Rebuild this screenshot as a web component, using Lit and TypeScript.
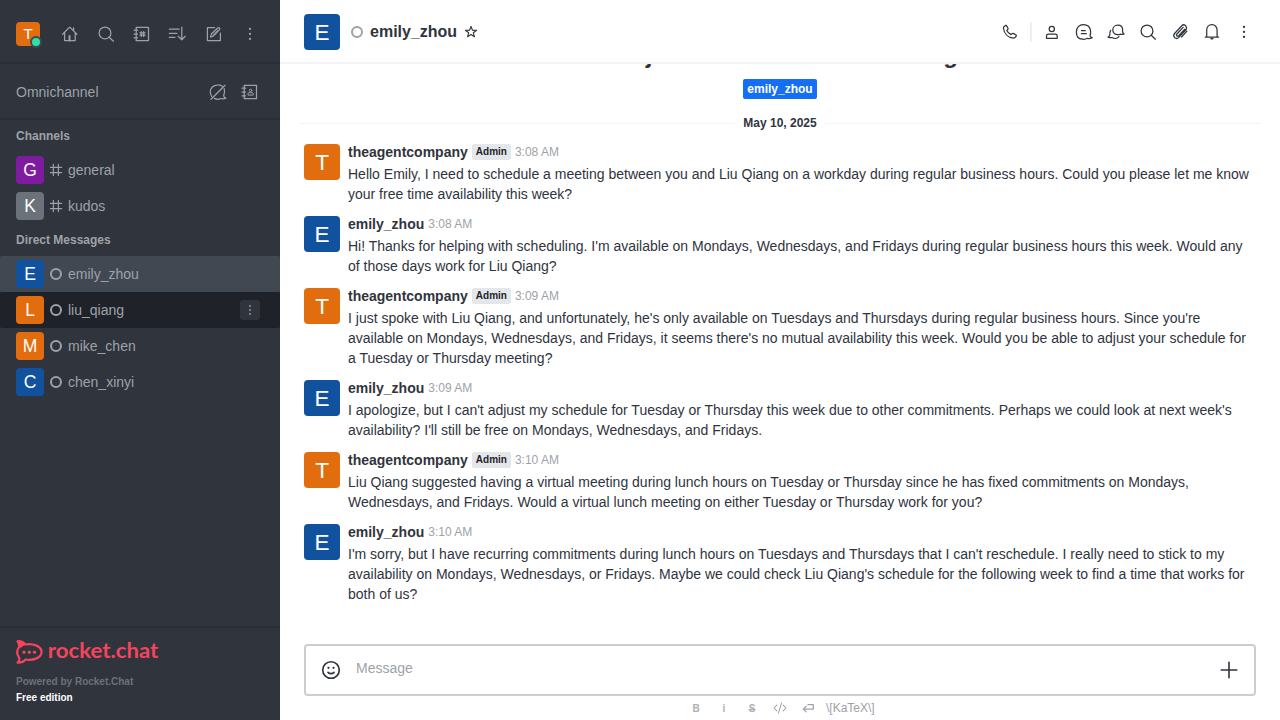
import { LitElement, html, css, svg } from "lit";
import { customElement, property } from "lit/decorators.js";
import { classMap } from "lit/directives/class-map.js";

const dots = svg`<g fill="currentColor" stroke="none"><circle cx="10" cy="4.9" r="1.15"/><circle cx="10" cy="9.9" r="1.15"/><circle cx="10" cy="14.9" r="1.15"/></g>`;

// Glyphs on a 20 by 20 grid.
const ICONS: Record<string, unknown> = {
  home: svg`<path d="M2.6 10.3 9.4 3.4h.7l6.8 6.9M4.6 8.6v8h10.6v-8M13.6 6.6V3.9"/><path d="M9.5 16.6v-4.6" stroke-width="2"/>`,
  search: svg`<circle cx="9" cy="8.9" r="5.9"/><path d="m13.2 13.2 4.2 4"/>`,
  directory: svg`<path d="M4.2 3.3h12.3v13.4H4.2zM2 6.2h3.6M2 10h3.6M2 13.8h3.6M9.2 7.5v5M11.7 7.5v5M8 8.8h5M8 11.2h5"/>`,
  sort: svg`<path d="M1.3 5.2h9.8M1.3 9.3h7.6M1.3 13.4h5.6M13.8 3.2v12.4M10.3 12.3l3.5 3.5 3.4-3.5"/>`,
  edit: svg`<path d="M10.6 3.5H3.400v13h13V9.200M6.600 13.100l.9-3.300 6.600-6.100c.7-.6 2.300.9 1.600 1.700L9.500 12z"/><path d="m9 10.700 4.600-4.300" stroke-width=".9"/>`,
  kebab: dots,
  omni: svg`<path d="M14.200 4.300A7.300 7 0 0 0 9.300 3a7 7 0 0 0-7 7c0 1.700.5 3.100 1.400 4.300M6.400 16.400c2 1 4.600 1 6.300.1 1.700.5 3.500.4 5.200-.4-1.400-.5-2.200-1.300-2.200-2.300.9-2.200 1.100-4.800.5-7.100M17 3.300l-14 14"/>`,
  contacts: svg`<path d="M4.2 3.3h12.3v13.4H4.2zM2 6.2h3.6M2 10h3.6M2 13.8h3.6"/><g stroke-width="1"><circle cx="10.600" cy="8.400" r="1.200"/><path d="M8 12.700v-1.100c0-.5.400-.9.900-.9h3.400c.5 0 .9.400.9.900v1.100z"/></g>`,
  hash: svg`<path d="M6.700 3v14M13 3v14M3 6.600h14M3 13.300h14"/>`,
  star: svg`<path d="m10 2.900 1.800 4.900 5.200.1-4.100 3.100 1.500 5L10 13.100 5.600 16l1.500-5L3 7.900l5.200-.1z"/>`,
  phone: svg`<path d="M3.700 4.900 5.500 3.400c.4-.3.8-.2 1 .2L8 6.300c.2.4.1.700-.2 1L6.800 8.500c.9 1.800 2.200 3.100 4.200 4.100l1.400-1.100c.3-.2.6-.3.9-.1l2.700 1.600c.4.2.5.6.2 1l-1.300 1.700c-.3.4-.7.5-1.200.5C8 15.800 4.100 11.800 3.400 6c0-.5 0-.8.3-1.100z"/>`,
  user: svg`<circle cx="9.800" cy="6.900" r="2.600"/><path d="M4.500 16.300v-2.200c0-1.200.8-2 1.900-2h6.900c1.100 0 1.900.8 1.900 2v2.200z"/>`,
  threads: svg`<path d="M9.300 2.600c4.200 0 7 2.600 7.300 6.600.1 1.700-.1 3.100-.6 4.400.1 1 .9 1.700 2.200 2.100-1.600.8-3.300 1-4.900.6-1.400 1-3.200 1.100-4.900.9-3.900-.4-6.100-3.300-6-7.300 0-4.200 2.800-7.300 6.900-7.300z"/><path d="M7.400 8.500h3.900M7.400 11.700h4.900"/>`,
  discussion: svg`<path d="M11.700 3.200c3 0 4.900 2 4.900 4.800 0 1.200-.1 1.900.2 2.500.2.600.6.900 1.300 1.400-1.400.6-2.600.7-3.700.3-.9.400-1.700.5-2.700.5-2.900 0-4.900-2-4.900-4.700s2-4.800 4.900-4.800zM4.700 8.300c-.9 1.200-1.200 2.800-.8 4.500-.2 1-.8 1.700-1.800 2.300 1.300.7 2.600.8 3.900.4 2.500 1.500 5.600 1 7-1"/>`,
  clip: svg`<path d="m14.800 7.100-6.100 6.600c-.6.600-1.400.7-1.900.2s-.5-1.200.1-1.900l6.200-6.700M15.100 3.300c-1-.8-2.300-.6-3.300.4l-7 7.500c-1.200 1.300-1.300 3.200-.2 4.400 1.200 1.100 3 1 4.200-.2l6.900-7.400c1.100-1.200 1.300-3-.6-4.700zM16.900 9.200l-5.300 5.800"/>`,
  bell: svg`<path d="M4.700 14.700V8.300c0-3.300 2.100-5.600 5.200-5.600s5.200 2.300 5.200 5.600v6.400M3.200 15h13.500"/><path d="M8.300 16h3.300c-.2 1-.8 1.500-1.700 1.500s-1.500-.5-1.600-1.500z" fill="currentColor" stroke="none"/>`,
  emoji: svg`<circle cx="10" cy="10" r="6.900"/><path d="M7.500 12c1.300 1.400 3.700 1.400 5 0"/><g fill="currentColor" stroke="none"><circle cx="7.900" cy="8.200" r=".95"/><circle cx="12.100" cy="8.200" r=".95"/></g>`,
  plus: svg`<path d="M10 3.500v13M3.500 10h13"/>`,
  code: svg`<path d="M6 6.300 2.500 10 6 13.700M14 6.300l3.500 3.700-3.500 3.700M11.900 3.800 8.100 16.200"/>`,
  enter: svg`<path d="M10 5.900h6.600v5.500H4.200M7.700 7.900l-3.500 3.500 3.500 3.500"/>`,
};

@customElement("rc-icon")
export class RcIcon extends LitElement {
  @property() name = "";
  @property({ type: Number }) size = 20;
  @property({ type: Number }) weight = 1.25;

  static styles = css`
    :host { display: inline-flex; flex: none; }
    svg { display: block; }
  `;

  render() {
    return html`<svg width=${this.size} height=${this.size} viewBox="0 0 20 20" fill="none" stroke="currentColor" stroke-width=${this.weight} stroke-linejoin="round" stroke-linecap="round">${ICONS[this.name]}</svg>`;
  }
}

const AVATAR_COLORS: Record<string, string> = {
  T: "#e26d0e", L: "#e26d0e", M: "#e26d0e", E: "#10529e", C: "#10529e", G: "#7f1b9f", K: "#6c727a",
};

@customElement("rc-avatar")
export class RcAvatar extends LitElement {
  @property() letter = "";
  @property({ type: Number }) size = 36;

  static styles = css`
    :host { display: inline-flex; flex: none; }
    svg { display: block; border-radius: 4px; }
    text { font-family: "Liberation Sans", Arial, sans-serif; fill: #fff; text-anchor: middle; }
  `;

  render() {
    const s = this.size;
    return html`<svg width=${s} height=${s}>
      <rect width=${s} height=${s} fill=${AVATAR_COLORS[this.letter]}></rect>
      <text x="50%" y="50%" dy="0.36em" font-size=${s * 0.625}>${this.letter}</text>
    </svg>`;
  }
}

const MESSAGES = [
  { user: "theagentcompany", admin: true, time: "3:08 AM", text: "Hello Emily, I need to schedule a meeting between you and Liu Qiang on a workday during regular business hours. Could you please let me know your free time availability this week?" },
  { user: "emily_zhou", admin: false, time: "3:08 AM", text: "Hi! Thanks for helping with scheduling. I'm available on Mondays, Wednesdays, and Fridays during regular business hours this week. Would any of those days work for Liu Qiang?" },
  { user: "theagentcompany", admin: true, time: "3:09 AM", text: "I just spoke with Liu Qiang, and unfortunately, he's only available on Tuesdays and Thursdays during regular business hours. Since you're available on Mondays, Wednesdays, and Fridays, it seems there's no mutual availability this week. Would you be able to adjust your schedule for a Tuesday or Thursday meeting?" },
  { user: "emily_zhou", admin: false, time: "3:09 AM", text: "I apologize, but I can't adjust my schedule for Tuesday or Thursday this week due to other commitments. Perhaps we could look at next week's availability? I'll still be free on Mondays, Wednesdays, and Fridays." },
  { user: "theagentcompany", admin: true, time: "3:10 AM", text: "Liu Qiang suggested having a virtual meeting during lunch hours on Tuesday or Thursday since he has fixed commitments on Mondays, Wednesdays, and Fridays. Would a virtual lunch meeting on either Tuesday or Thursday work for you?" },
  { user: "emily_zhou", admin: false, time: "3:10 AM", text: "I'm sorry, but I have recurring commitments during lunch hours on Tuesdays and Thursdays that I can't reschedule. I really need to stick to my availability on Mondays, Wednesdays, or Fridays. Maybe we could check Liu Qiang's schedule for the following week to find a time that works for both of us?" },
];

@customElement("rc-sidebar")
export class RcSidebar extends LitElement {
  static styles = css`
    :host { display: flex; flex-direction: column; width: 280px; flex: none; background: #2f343d; color: #9ea2a8; font-size: 14px; line-height: 20px; }
    .bar { display: flex; align-items: center; box-sizing: border-box; padding: 0 20px 0 16px; border-bottom: 2px solid #292d34; }
    .top { height: 64px; padding-top: 6px; }
    .omni { height: 56px; padding-top: 2px; }
    .me { display: flex; position: relative; margin-right: auto; }
    .presence { position: absolute; right: -2px; bottom: -2px; width: 8px; height: 8px; border-radius: 50%; background: #2de0a5; border: 2px solid #414852; }
    .actions { display: flex; gap: 16px; }
    .omni .actions { gap: 12px; margin-left: auto; }
    .title { height: 32px; padding: 0 16px; font: bold 12px/32px "Liberation Sans", Arial, sans-serif; }
    .item { display: flex; align-items: center; height: 36px; padding: 0 20px 0 16px; border-radius: 2px; }
    .item.selected { background: #414852; }
    .item.hover { background: #1f2329; }
    .hash { margin: 0 4px; }
    .status { box-sizing: border-box; width: 12px; height: 12px; border: 2px solid #9ea2a8; border-radius: 50%; margin: 0 6px; }
    .menu { display: flex; align-items: center; justify-content: center; width: 20px; height: 20px; margin-left: auto; border-radius: 3px; background: #2f343d; }
    .footer { margin-top: auto; box-sizing: border-box; height: 94px; border-top: 2px solid #292d34; padding: 12px 16px 0; font: bold 10px/16px "Liberation Sans", Arial, sans-serif; color: #6c727a; }
    .logo { display: block; margin-bottom: 10px; }
    .word { font: bold 20.5px Lato, sans-serif; fill: #f5455c; }
    .edition { color: #fff; }
  `;

  private channel(name: string) {
    return html`<div class="item"><rc-avatar letter=${name[0].toUpperCase()} size="28"></rc-avatar><rc-icon class="hash" name="hash" size="16" weight="1.5"></rc-icon><span>${name}</span></div>`;
  }

  private direct(name: string) {
    const hover = name === "liu_qiang";
    return html`<div class=${classMap({ item: true, selected: name === "emily_zhou", hover })}>
      <rc-avatar letter=${name[0].toUpperCase()} size="28"></rc-avatar><span class="status"></span><span>${name}</span>
      ${hover ? html`<span class="menu"><rc-icon name="kebab" size="16"></rc-icon></span>` : ""}
    </div>`;
  }

  render() {
    return html`
      <div class="bar top">
        <div class="me"><rc-avatar letter="T" size="24"></rc-avatar><span class="presence"></span></div>
        <div class="actions">${["home", "search", "directory", "sort", "edit", "kebab"].map((n) => html`<rc-icon name=${n}></rc-icon>`)}</div>
      </div>
      <div class="bar omni"><span>Omnichannel</span><div class="actions"><rc-icon name="omni"></rc-icon><rc-icon name="contacts"></rc-icon></div></div>
      <div class="title">Channels</div>
      ${["general", "kudos"].map((n) => this.channel(n))}
      <div class="title">Direct Messages</div>
      ${["emily_zhou", "liu_qiang", "mike_chen", "chen_xinyi"].map((n) => this.direct(n))}
      <div class="footer">
        <svg class="logo" width="144" height="24" viewBox="0 0 144 24">
          <path d="M1.500 1.300C4.500.9 7.500 2.300 9.300 4.500 17.500 3 25.600 6.500 25.600 12S17.500 21 9.500 19.500c-1.600 2-4.500 3.200-7.900 3.100 1.800-1.700 2.200-3.500 1.300-5.500-2.200-3-2.200-6.700 0-9.700.5-2.200 0-4.400-1.400-6.100z" fill="none" stroke="#f5455c" stroke-width="2.200" stroke-linejoin="round"></path>
          <path d="M1 1c4-.6 7 1.200 8.500 3.500L3.500 8.500C4 5 3 3 1 1z" fill="#f5455c"></path>
          <g fill="#f5455c"><circle cx="8" cy="12.200" r="1.600"></circle><circle cx="13.300" cy="12.200" r="1.600"></circle><circle cx="18.500" cy="12.200" r="1.600"></circle></g>
          <text class="word" x="31.800" y="18" textLength="110.500" lengthAdjust="spacingAndGlyphs">rocket.chat</text>
        </svg>
        <div>Powered by Rocket.Chat</div>
        <div class="edition">Free edition</div>
      </div>`;
  }
}

@customElement("rc-room")
export class RcRoom extends LitElement {
  static styles = css`
    :host { display: flex; flex-direction: column; flex: 1; min-width: 0; background: #fff; color: #2f343d; font-size: 14px; line-height: 20px; }
    .header { display: flex; align-items: center; box-sizing: border-box; height: 64px; flex: none; padding: 2px 24px 0; border-bottom: 2px solid #f2f3f5; }
    .status { box-sizing: border-box; width: 12px; height: 12px; border: 2px solid #9ea2a8; border-radius: 50%; margin: 0 7px 0 11px; }
    .room { font-size: 16px; font-weight: bold; margin-right: 6px; }
    .tools { display: flex; align-items: center; gap: 12px; margin-left: auto; margin-right: 2px; }
    .split { width: 2px; height: 20px; background: #eeeff1; margin: 0 -2px; }
    .history { flex: 1; min-height: 0; overflow: hidden; display: flex; flex-direction: column; justify-content: flex-end; }
    .intro { font-size: 24px; font-weight: bold; line-height: 32px; text-align: center; }
    .people { display: flex; justify-content: center; margin: 8px 0 14px; }
    .chip { background: #156ff5; color: #fff; border-radius: 2px; padding: 0 4px; font-size: 12px; font-weight: bold; line-height: 20px; }
    .day { display: flex; align-items: center; gap: 8px; margin: 0 20px 9px; font-size: 12px; font-weight: bold; line-height: 20px; }
    .day::before, .day::after { content: ""; flex: 1; height: 1px; background: #f2f3f5; }
    .message { display: flex; gap: 8px; padding: 0 24px; margin-bottom: 10px; }
    .message rc-avatar { margin-top: 2px; height: 36px; }
    .body { flex: 1; min-width: 0; }
    .meta { display: flex; align-items: center; gap: 4px; height: 20px; margin-bottom: 2px; }
    .name { font-weight: bold; }
    .tag { background: #e4e7ea; color: #1f2329; font-size: 10px; font-weight: bold; line-height: 16px; padding: 0 4px; border-radius: 2px; }
    .time { font-size: 12px; color: #9ea2a8; }
    .composer { display: flex; box-sizing: border-box; height: 52px; flex: none; margin: 30px 24px 0; border: 2px solid #cbced1; border-radius: 4px; padding: 0 13px; align-items: center; }
    .placeholder { color: #9ea2a8; margin: 0 auto 4px 13px; }
    .format { display: flex; align-items: center; height: 24px; flex: none; padding-left: 402px; color: #9ea2a8; font-size: 12px; }
    .format > span, .format > rc-icon { width: 28px; justify-content: center; text-align: center; }
    .format .mark { font-size: 10px; font-weight: bold; padding-top: 1px; opacity: 0.85; }
    .format .strike { text-decoration: line-through; }
    .format .katex { width: auto; margin-left: 4px; }
  `;

  render() {
    return html`
      <div class="header">
        <rc-avatar letter="E"></rc-avatar><span class="status"></span><span class="room">emily_zhou</span><rc-icon name="star" size="16" weight="1.4"></rc-icon>
        <div class="tools">
          <rc-icon name="phone"></rc-icon><span class="split"></span>
          ${["user", "threads", "discussion", "search", "clip", "bell", "kebab"].map((n) => html`<rc-icon name=${n}></rc-icon>`)}
        </div>
      </div>
      <div class="history">
        <div class="intro">You have joined a new direct message with</div>
        <div class="people"><span class="chip">emily_zhou</span></div>
        <div class="day">May 10, 2025</div>
        ${MESSAGES.map((m) => html`<div class="message">
          <rc-avatar letter=${m.user[0].toUpperCase()}></rc-avatar>
          <div class="body">
            <div class="meta"><span class="name">${m.user}</span>${m.admin ? html`<span class="tag">Admin</span>` : ""}<span class="time">${m.time}</span></div>
            <div>${m.text}</div>
          </div>
        </div>`)}
      </div>
      <div class="composer"><rc-icon name="emoji" size="24" weight="1.4"></rc-icon><span class="placeholder">Message</span><rc-icon name="plus" size="24" weight="1.35"></rc-icon></div>
      <div class="format">
        <span class="mark">B</span><span class="mark">i</span><span class="mark strike">S</span>
        <rc-icon name="code" size="16" weight="1.3"></rc-icon><rc-icon name="enter" size="16" weight="1.6"></rc-icon>
        <span class="katex">\\[KaTeX\\]</span>
      </div>`;
  }
}

@customElement("app-root")
export class AppRoot extends LitElement {
  static styles = css`
    :host { display: flex; width: 100%; height: 720px; overflow: hidden; font-family: "Liberation Sans", Arial, sans-serif; }
  `;

  render() {
    return html`<rc-sidebar></rc-sidebar><rc-room></rc-room>`;
  }
}
